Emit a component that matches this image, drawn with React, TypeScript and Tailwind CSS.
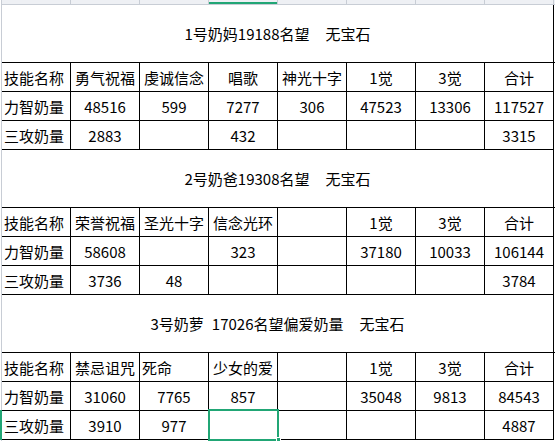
const GREEN = "bg-[#21a675]";

type Row = (string | number | null)[];

const blocks: { title: React.ReactNode; rows: Row[]; leftCols?: number[] }[] = [
  {
    title: (
      <>
        1号奶妈19188名望<span className="inline-block w-[16px]" />无宝石
      </>
    ),
    rows: [
      ["技能名称", "勇气祝福", "虔诚信念", "唱歌", "神光十字", "1觉", "3觉", "合计"],
      ["力智奶量", 48516, 599, 7277, 306, 47523, 13306, 117527],
      ["三攻奶量", 2883, null, 432, null, null, null, 3315],
    ],
  },
  {
    title: (
      <>
        2号奶爸19308名望<span className="inline-block w-[16px]" />无宝石
      </>
    ),
    rows: [
      ["技能名称", "荣誉祝福", "圣光十字", "信念光环", null, "1觉", "3觉", "合计"],
      ["力智奶量", 58608, null, 323, null, 37180, 10033, 106144],
      ["三攻奶量", 3736, 48, null, null, null, null, 3784],
    ],
  },
  {
    title: (
      <>
        3号奶萝<span className="inline-block w-[8px]" />17026名望偏爱奶量
        <span className="inline-block w-[16px]" />无宝石
      </>
    ),
    rows: [
      ["技能名称", "禁忌诅咒", "死命", "少女的爱", null, "1觉", "3觉", "合计"],
      ["力智奶量", 31060, 7765, 857, null, 35048, 9813, 84543],
      ["三攻奶量", 3910, 977, null, null, null, null, 4887],
    ],
  },
];

function Title({ children }: { children: React.ReactNode }) {
  return (
    <div className="h-[57px] w-[552px] border-r border-black flex items-center justify-center text-[15px] leading-none whitespace-nowrap">
      {children}
    </div>
  );
}

function Table({ rows }: { rows: Row[] }) {
  return (
    <div className="grid grid-cols-[repeat(8,69px)] border-t border-black">
      {rows.map((row, r) =>
        row.map((v, c) => {
          const left = c === 0 || (r === 0 && v === "死命");
          return (
            <div
              key={`${r}-${c}`}
              className={
                "h-[29px] border-r border-b border-black flex items-center text-[15px] leading-none whitespace-nowrap " +
                (left ? "justify-start pl-[2px]" : "justify-center")
              }
            >
              {v}
            </div>
          );
        })
      )}
    </div>
  );
}

export default function App() {
  return (
    <div
      className="relative w-[555px] h-[441px] overflow-hidden bg-white text-black flex"
      style={{ fontFamily: '"Noto Sans CJK SC", "Liberation Sans", sans-serif' }}
    >
      {/* row header edge */}
      <div className="w-[2px] h-full flex flex-col">
        <div className="h-[410px] border-r border-[#c8cdd5]" />
        <div className={`h-[30px] ${GREEN}`} />
        <div className="flex-1 border-r border-[#c8cdd5]" />
      </div>

      <div className="w-[553px] flex flex-col">
        {/* column header edge */}
        <div className="grid grid-cols-[repeat(8,69px)] h-[5px] bg-[#eef0f4] border-b border-[#c8cdd5]">
          {Array.from({ length: 8 }).map((_, i) => (
            <div key={i} className="border-r border-[#c8cdd5] flex flex-col">
              {i === 3 && <div className={`mt-auto h-[2px] ${GREEN}`} />}
            </div>
          ))}
        </div>

        {blocks.map((b, i) => (
          <div key={i}>
            <Title>{b.title}</Title>
            <Table rows={b.rows} />
          </div>
        ))}
      </div>

      {/* selected cell */}
      <div className="absolute left-[208px] top-[409px] w-[71px] h-[32px] border-2 border-[#21a675]" />
      <div className="absolute left-[276px] top-[437px] w-[5px] h-[5px] bg-[#21a675] border border-white" />
    </div>
  );
}
